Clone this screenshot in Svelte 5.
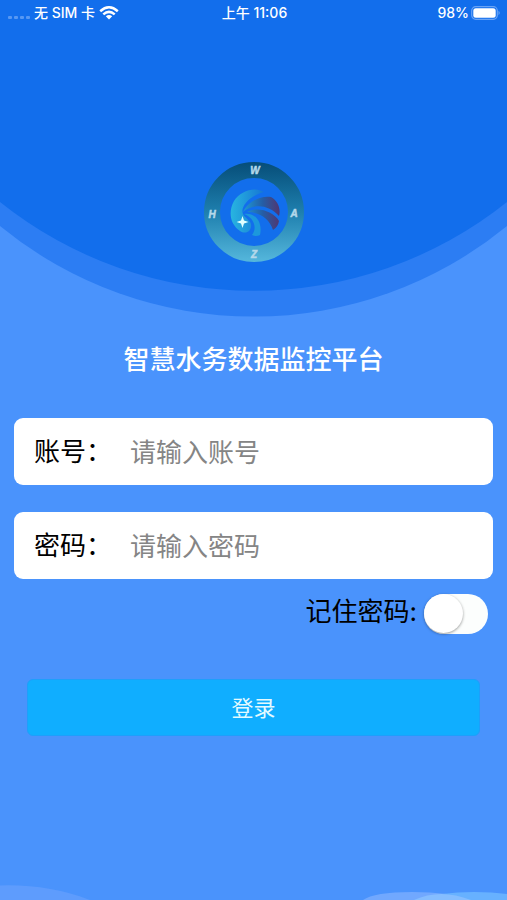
<script>
  let account = $state('');
  let password = $state('');
  let remember = $state(false);

  function submit(event) {
    event.preventDefault();
  }
</script>

<div class="page">
  <svg class="arc" viewBox="0 0 507 320" preserveAspectRatio="none" aria-hidden="true">
    <path d="M0 0H507V226A400 400 0 0 1 0 226Z" fill="#2c7df3" />
    <path d="M0 0H507V202A406 406 0 0 1 0 202Z" fill="#126eec" />
  </svg>
  <svg class="waves" viewBox="0 0 507 20" preserveAspectRatio="none" aria-hidden="true">
    <path d="M0 5.500Q48 4 90 20H0Z" fill="#5e9cfd" />
    <path d="M363 20Q374 12 412 12Q448 12 480 20Z" fill="#71a8fe" />
    <path d="M414 20Q440 12 474 12Q492 12 507 14V20Z" fill="#67b1ff" />
    <path d="M414 20Q440 8 471 20Z" fill="#85bdff" />
  </svg>

  <header class="status">
    <div class="carrier">
      <svg width="22" height="5" viewBox="0 0 22 5" aria-hidden="true">
        <g fill="#5798f3">
          <rect x="0" y="1" width="4" height="3" rx="1" />
          <rect x="6" y="1" width="4" height="3" rx="1" />
          <rect x="12" y="1" width="4" height="3" rx="1" />
          <rect x="18" y="1" width="4" height="3" rx="1" />
        </g>
      </svg>
      <span>无 SIM 卡</span>
      <svg width="20" height="14" viewBox="0 0 20 14" aria-hidden="true">
        <g fill="none" stroke="#fff" stroke-width="2.5">
          <path d="M1.2 5.2Q10-2.6 18.8 5.2" />
          <path d="M4.3 8.4Q10 3.4 15.7 8.4" />
        </g>
        <path d="M6.8 10.3Q10 7.8 13.2 10.3L10 13.6Z" fill="#fff" />
      </svg>
    </div>
    <time>上午 11:06</time>
    <div class="power">
      <span>98%</span>
      <svg width="30" height="14" viewBox="0 0 30 14" aria-hidden="true">
        <rect x=".7" y=".7" width="25.6" height="12.6" rx="4" fill="none" stroke="#69a3f5" stroke-width="1.2" />
        <rect x="2.3" y="2.3" width="22.4" height="9.4" rx="2.5" fill="#fff" />
        <path d="M27.5 4.8Q30 7 27.5 9.2Z" fill="#69a3f5" />
      </svg>
    </div>
  </header>

  <main>
    <svg class="logo" viewBox="0 0 100 100" role="img" aria-label="WAZH">
      <defs>
        <linearGradient id="ring" gradientUnits="userSpaceOnUse" x1="0" y1="0" x2="0" y2="100">
          <stop offset="0" stop-color="#064d78" />
          <stop offset=".5" stop-color="#1e7fae" />
          <stop offset="1" stop-color="#55b7dc" />
        </linearGradient>
        <linearGradient id="shell" x1="0" y1="0" x2="1" y2="0">
          <stop offset="0" stop-color="#28b5e0" />
          <stop offset="1" stop-color="#1676d4" />
        </linearGradient>
        <linearGradient id="fin" gradientUnits="userSpaceOnUse" x1="38" y1="48" x2="76" y2="48">
          <stop offset="0" stop-color="#1c9bd9" />
          <stop offset=".55" stop-color="#255da5" />
          <stop offset="1" stop-color="#52356f" />
        </linearGradient>
      </defs>
      <circle cx="50" cy="50" r="42" fill="none" stroke="url(#ring)" stroke-width="16" />
      <path d="M60 30C51 24 36 29 30 39C24 50 26 62 36 69C42 73 48 69 47 62C46 58 41 56 39 52C36 45 45 34 60 30Z" fill="url(#shell)" />
      <path d="M39 50C43 40 57 33 67 35C74 39 77 47 75 54C65 43 50 41 39 50Z" fill="url(#fin)" />
      <path d="M43 50C54 44 70 50 75 59Q74 65 69 68C65 56 55 50 43 50Z" fill="url(#fin)" />
      <path d="M40 52C51 50 59 60 56 73Q52 75 48 73C54 65 49 55 40 52Z" fill="#1c98dc" />
      <path d="M38.500 54L40 58.500L44.500 60L40 61.500L38.500 66L37 61.500L32.500 60L37 58.500Z" fill="#e0ffff" />
      <g class="letters">
        <text x="51" y="12">W</text>
        <text x="90" y="55">A</text>
        <text x="50" y="96">Z</text>
        <text x="8" y="56">H</text>
      </g>
    </svg>

    <h1>智慧水务数据监控平台</h1>

    <form onsubmit={submit}>
      <div class="field">
        <label for="account">账号：</label>
        <input id="account" type="text" placeholder="请输入账号" autocomplete="username" bind:value={account} />
      </div>
      <div class="field">
        <label for="password">密码：</label>
        <input id="password" type="password" placeholder="请输入密码" autocomplete="current-password" bind:value={password} />
      </div>
      <div class="remember">
        <label for="remember">记住密码:</label>
        <input id="remember" type="checkbox" role="switch" bind:checked={remember} />
      </div>
      <button type="submit">登录</button>
    </form>
  </main>
</div>

<style>
  :global(body) {
    margin: 0;
    background: #4a93fc;
  }

  .page {
    position: relative;
    box-sizing: border-box;
    min-height: 100vh;
    overflow: hidden;
    background: #4a93fc;
    font-family: Inter, "Noto Sans CJK SC", sans-serif;
  }

  .arc,
  .waves {
    position: absolute;
    left: 0;
    width: 100%;
  }

  .arc {
    top: 0;
    height: 320px;
  }

  .waves {
    bottom: 0;
    height: 20px;
  }

  .status {
    position: relative;
    display: grid;
    grid-template-columns: 1fr auto 1fr;
    align-items: center;
    height: 26px;
    padding: 0 6px 0 8px;
    color: #fff;
    font-size: 14px;
    font-weight: 500;
    line-height: 20px;
  }

  .carrier,
  .power {
    display: flex;
    align-items: center;
    gap: 4px;
  }

  .carrier svg:first-child {
    margin-top: 8px;
  }

  .power {
    justify-content: flex-end;
    gap: 2px;
  }

  main {
    position: relative;
    display: flex;
    flex-direction: column;
    align-items: center;
    padding: 136px 14px 0;
  }

  .logo {
    width: 100px;
    height: 100px;
  }

  .letters {
    fill: #b5d8ea;
    stroke: #b5d8ea;
    stroke-width: 0.5px;
    font-family: "Liberation Sans", sans-serif;
    font-size: 10px;
    font-style: italic;
    font-weight: 700;
    text-anchor: middle;
  }

  h1 {
    margin: 78px 0 0;
    color: #fff;
    font-size: 26px;
    font-weight: 500;
    line-height: 40px;
  }

  form {
    display: flex;
    flex-direction: column;
    width: 100%;
    margin-top: 38px;
    font-size: 26px;
    line-height: 40px;
  }

  .field {
    display: flex;
    align-items: center;
    box-sizing: border-box;
    height: 67px;
    margin-bottom: 27px;
    padding: 0 20px;
    border-radius: 9px;
    background: #fff;
  }

  .field label {
    flex: none;
    width: 96px;
    white-space: nowrap;
  }

  .field input {
    flex: 1;
    min-width: 0;
    height: 40px;
    padding: 2px 0 0;
    border: 0;
    outline: 0;
    background: none;
    color: #000;
    font: inherit;
  }

  .field input::placeholder {
    color: #858585;
    opacity: 1;
  }

  .remember {
    display: flex;
    align-items: center;
    justify-content: flex-end;
    gap: 7px;
    height: 40px;
    margin-top: -14px;
    padding-right: 5px;
  }

  .remember input {
    appearance: none;
    display: flex;
    width: 64px;
    height: 40px;
    margin: 4px 0 0;
    border-radius: 20px;
    background: #fcfefd;
    cursor: pointer;
  }

  .remember input::before {
    content: "";
    width: 39px;
    height: 39px;
    border-radius: 50%;
    background: #fff;
    box-shadow: 0 1px 3px #0006;
    transition: margin 0.2s;
  }

  .remember input:checked {
    background: #10aeff;
  }

  .remember input:checked::before {
    margin-left: 25px;
  }

  button {
    height: 57px;
    margin: 47px 13px 40px;
    padding: 0;
    border: 1px solid #1e9ffb;
    border-radius: 6px;
    background: #10aeff;
    color: #e4faff;
    font: inherit;
    font-size: 22px;
    cursor: pointer;
  }
</style>
